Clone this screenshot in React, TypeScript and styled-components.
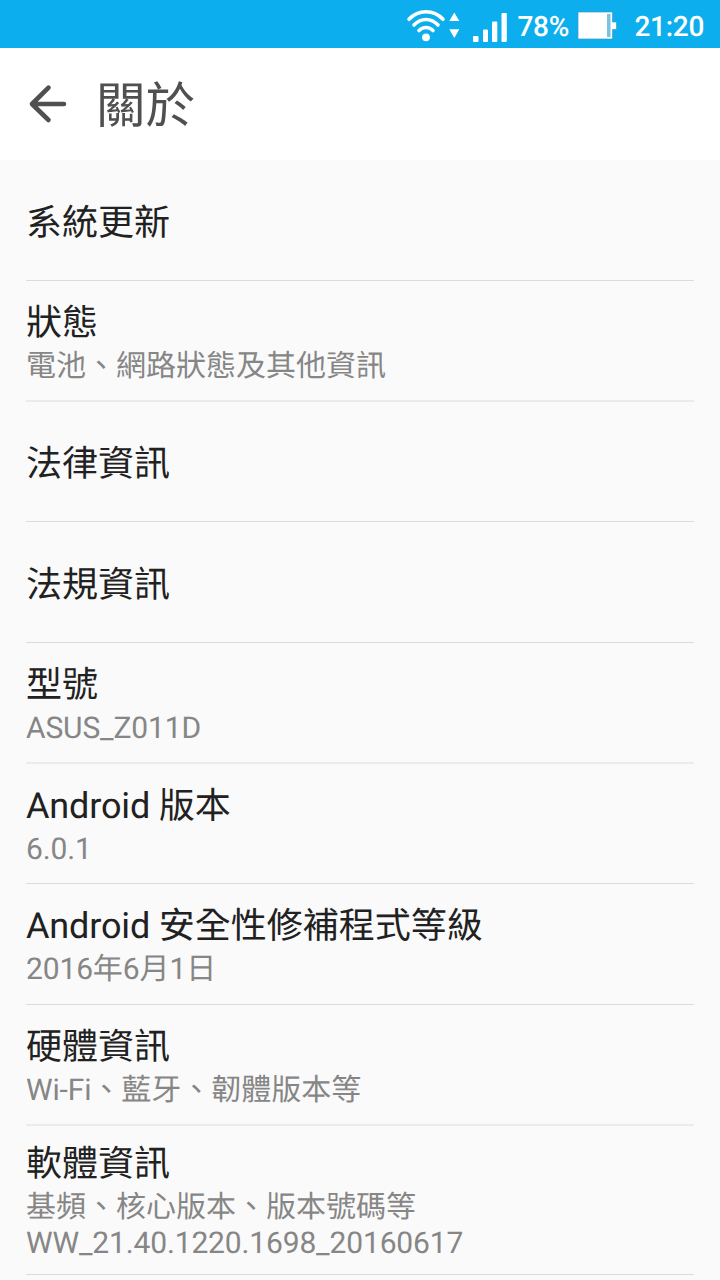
import React from 'react';
import styled, { createGlobalStyle } from 'styled-components';

const GlobalStyle = createGlobalStyle`
  * { box-sizing: border-box; }
  body {
    margin: 0;
    background: #fafafa;
    font-family: Roboto, "Noto Sans CJK TC", sans-serif;
    text-rendering: geometricPrecision;
  }
`;

const Screen = styled.div`
  display: flex;
  flex-direction: column;
  width: 720px;
  height: 1280px;
  overflow: hidden;
  background: #fafafa;
`;

const StatusBar = styled.header`
  display: flex;
  flex: none;
  align-items: flex-start;
  justify-content: flex-end;
  height: 48px;
  padding-right: 16px;
  background: #0caeed;
  color: #fff;
`;

const StatusIcons = styled.svg`
  display: block;
  width: 110px;
  height: 48px;
`;

const BatteryIcon = styled.svg`
  display: block;
  width: 40px;
  height: 48px;
  margin: 0 16px 0 8px;
`;

const StatusText = styled.span<{ $width: number }>`
  width: ${(p) => p.$width}px;
  padding-top: 10px;
  font-size: 28px;
  font-weight: 500;
  letter-spacing: -0.3px;
  line-height: 33px;
  text-align: right;
  white-space: nowrap;
`;

const AppBar = styled.div`
  display: flex;
  flex: none;
  align-items: center;
  height: 112px;
  padding-left: 28px;
  background: #fff;
  color: #505050;
`;

const BackIcon = styled.svg`
  display: block;
  width: 40px;
  height: 40px;
  margin-right: 28px;
`;

const PageTitle = styled.h1`
  margin: 0;
  padding-top: 6px;
  font-size: 49.5px;
  font-weight: 400;
  line-height: 56px;
`;

const List = styled.ul`
  margin: 0;
  padding: 0 26px;
  list-style: none;
`;

const Item = styled.li<{ $height: number; $softLine?: boolean }>`
  display: flex;
  flex-direction: column;
  justify-content: center;
  box-sizing: content-box;
  height: ${(p) => p.$height - 5}px;
  padding-top: 5px;
  border-bottom: ${(p) => (p.$softLine ? '2px solid #ebebeb' : '1px solid #dcdcdc')};
`;

const ItemTitle = styled.div`
  color: #212121;
  font-size: 36px;
  line-height: 42px;
  white-space: nowrap;
`;

const ItemSummary = styled.div`
  margin-top: 5px;
  color: #868686;
  font-size: 30px;
  line-height: 36px;
  white-space: pre-line;
`;

const Latin = styled.span`
  letter-spacing: -0.15px;
`;

interface Entry {
  title: string;
  summary?: string;
  height: number;
  soft?: boolean;
}

const entries: Entry[] = [
  { title: '系統更新', height: 120 },
  { title: '狀態', summary: '電池、網路狀態及其他資訊', height: 119, soft: true },
  { title: '法律資訊', height: 119 },
  { title: '法規資訊', height: 120 },
  { title: '型號', summary: 'ASUS_Z011D', height: 119, soft: true },
  { title: 'Android 版本', summary: '6.0.1', height: 119 },
  { title: 'Android 安全性修補程式等級', summary: '2016年6月1日', height: 120 },
  { title: '硬體資訊', summary: 'Wi-Fi、藍牙、韌體版本等', height: 119, soft: true },
  { title: '軟體資訊', summary: '基頻、核心版本、版本號碼等\nWW_21.40.1220.1698_20160617', height: 148 },
];

// Tightens the Latin runs of a mixed-script label.
function MixedText({ text }: { text: string }) {
  return (
    <>
      {text.split(/([ -~]+)/).map((run, i) => (i % 2 ? <Latin key={i}>{run}</Latin> : run))}
    </>
  );
}

export default function App() {
  return (
    <Screen lang="zh-Hant">
      <GlobalStyle />
      <StatusBar>
        <StatusIcons viewBox="400 0 110 48" fill="none">
          <g stroke="#fff" strokeWidth="3.6" strokeLinecap="round">
            <path d="M409 19.3C418.5 9.3 433.5 9.3 443 19.3" />
            <path d="M414 25C421 17.7 431 17.7 438 25" />
            <path d="M419 30.5C423 26.5 429 26.5 433 30.5" />
          </g>
          <circle cx="426" cy="37.3" r="3.9" fill="#fff" />
          <path d="M454.3 12.5L459.3 21H449.3ZM454.3 38L459.3 29.3H449.3Z" fill="#fff" />
          <g fill="#fff">
            <rect x="473" y="36" width="5.5" height="6" rx="1" />
            <rect x="483" y="29.5" width="5" height="12.5" rx="1" />
            <rect x="492" y="21.5" width="5.3" height="20.5" rx="1" />
            <rect x="501.5" y="13" width="5.3" height="29" rx="1" />
          </g>
        </StatusIcons>
        <StatusText $width={59}>78%</StatusText>
        <BatteryIcon viewBox="577 0 40 48">
          <path d="M578 12H612.5V22H616.5V29.5H612.5V39H578Z" fill="#fff" stroke="#3c9fc4" strokeWidth=".7" />
          <rect x="607" y="14" width="3.5" height="23" fill="#78c3e2" />
        </BatteryIcon>
        <StatusText $width={71}>21:20</StatusText>
      </StatusBar>
      <AppBar>
        <BackIcon viewBox="28 84 40 40" fill="none" stroke="#505050" strokeWidth="4.6" strokeLinecap="round" strokeLinejoin="round">
          <path d="M48.5 87.7L32 104L48.5 120M32 104H64" />
        </BackIcon>
        <PageTitle>關於</PageTitle>
      </AppBar>
      <List>
        {entries.map((e) => (
          <Item key={e.title} $height={e.height} $softLine={e.soft}>
            <ItemTitle><MixedText text={e.title} /></ItemTitle>
            {e.summary && <ItemSummary><MixedText text={e.summary} /></ItemSummary>}
          </Item>
        ))}
      </List>
    </Screen>
  );
}
